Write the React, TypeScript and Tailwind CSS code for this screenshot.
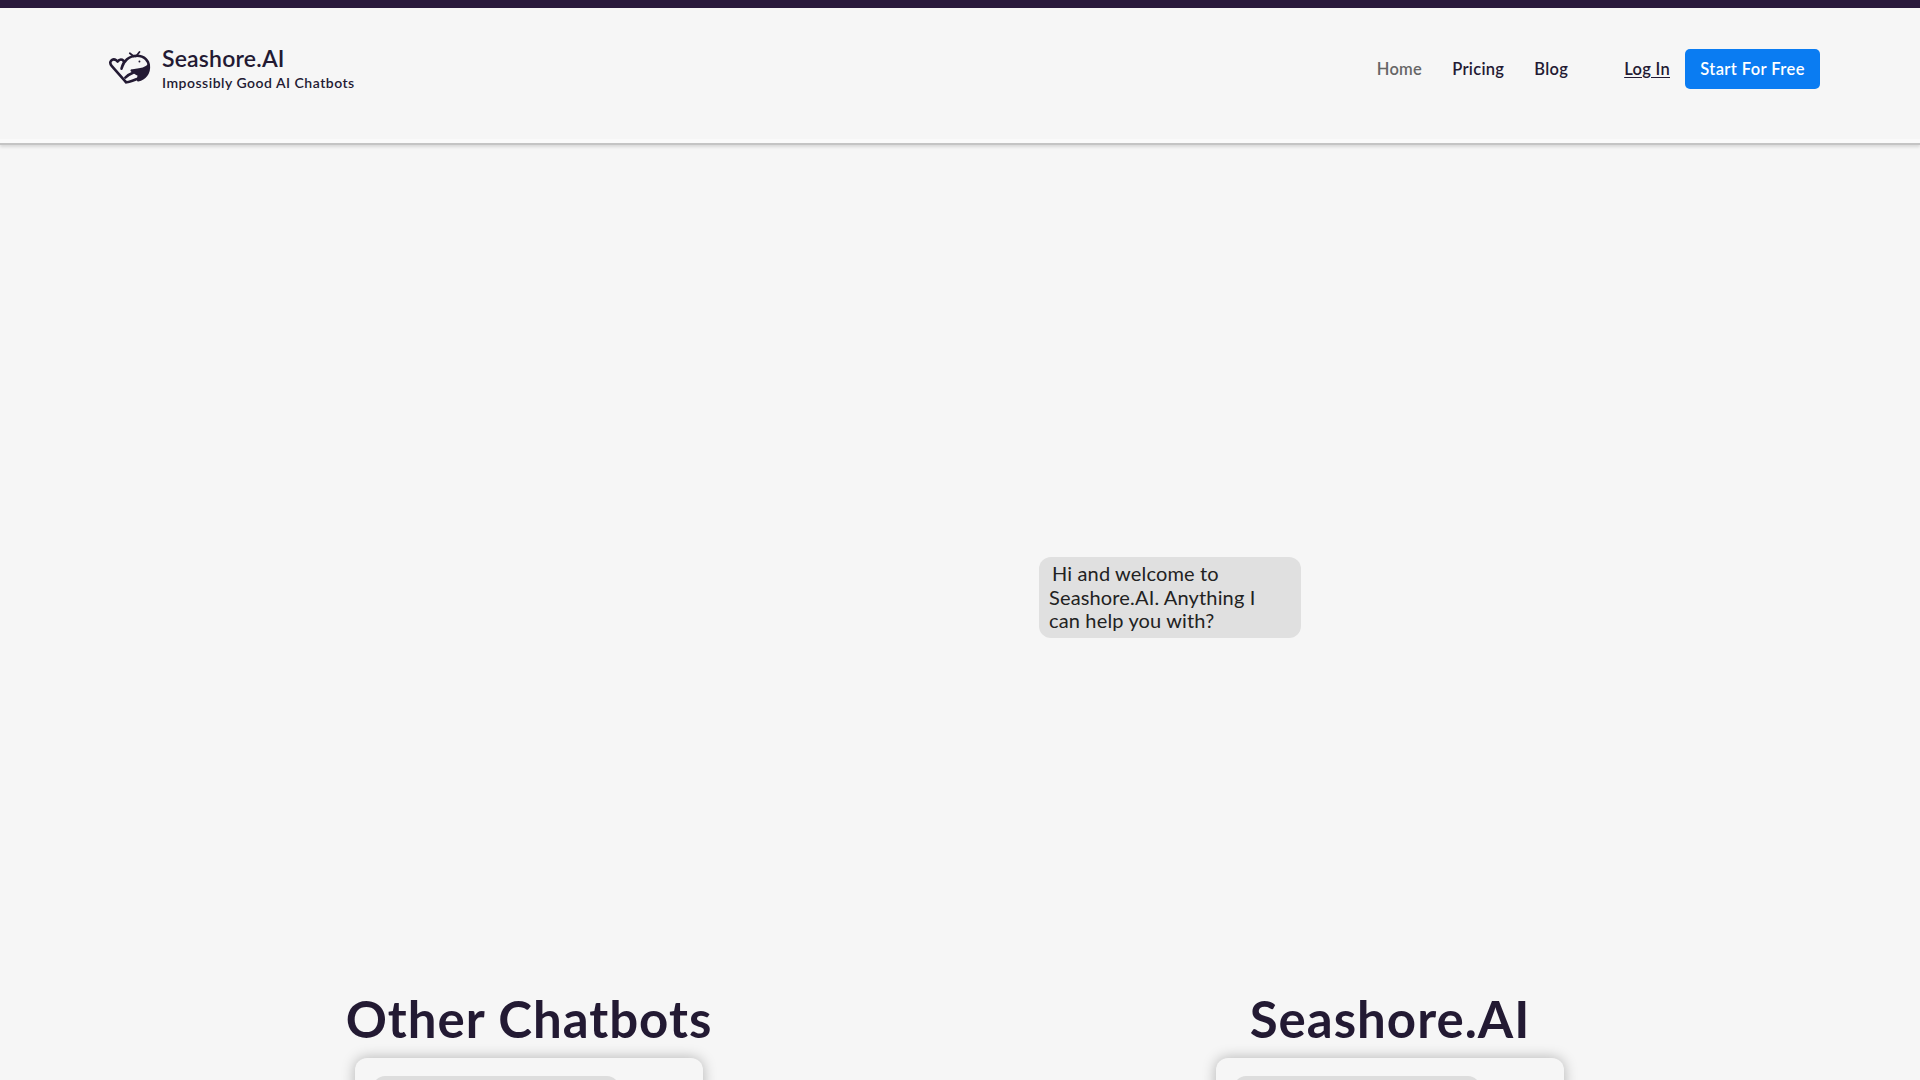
const font = "font-['Lato','Noto_Sans',sans-serif]";

function WhaleLogo() {
  return (
    <svg viewBox="54 64 134 104" className="w-[43px] h-[34px] -mt-[2px]" fill="none" stroke="#231a33" strokeWidth="8" strokeLinecap="round" strokeLinejoin="round">
      {/* tail and back */}
      <path d="M110 160 L66 110 C54 96 68 84 80 92 L84 96 C92 84 108 90 102 104 C99 110 97 113 96 118 C102 94 120 78 144 78 C168 78 182 94 181 112" />
      {/* flipper */}
      <path d="M108 146 C116 138 124 134 132 131" />
      <path d="M110 160 C120 162 134 154 150 148" />
      <path d="M128 124 C146 122 168 122 181 108 C184 132 168 150 148 154 L150 138 C144 134 136 130 128 124 Z" fill="#231a33" />
      {/* spout */}
      <path d="M122 70 L135 80 M152 66 L141 80" strokeWidth="5.5" />
      <circle cx="152" cy="96" r="3" fill="#231a33" stroke="none" />
    </svg>
  );
}

function Navbar() {
  return (
    <header className="h-[137px] shrink-0 flex items-center justify-between pl-[108px] pr-[100px] pb-[13px] border-b-2 border-[#c4c4c4] shadow-[inset_0_-5px_0_-1px_#fafafa,0_2px_3px_rgba(0,0,0,0.12)]">
      <div className="flex items-center gap-[11px]">
        <WhaleLogo />
        <div className="flex flex-col text-[#231a33]">
          <span className="text-[23px] leading-[26px] font-semibold tracking-[0.2px]">Seashore.AI</span>
          <span className="mt-[2px] text-[14px] leading-[20px] font-semibold tracking-[0.5px]">Impossibly Good AI Chatbots</span>
        </div>
      </div>
      <nav className="flex items-center text-[16.5px] font-semibold tracking-[0.3px] text-[#231a33]">
        <a className="text-[#666666]">Home</a>
        <a className="ml-[30px]">Pricing</a>
        <a className="ml-[30px]">Blog</a>
        <a className="ml-[56px] underline underline-offset-2">Log In</a>
        <a className="ml-[15px] w-[135px] h-[40px] flex items-center justify-center rounded-[5px] bg-[#0a7cf2] text-white tracking-[0.4px]">Start For Free</a>
      </nav>
    </header>
  );
}

function Comparison({ title }: { title: string }) {
  return (
    <div className="w-[348px] flex flex-col items-center">
      <h2 className="whitespace-nowrap text-[51px] leading-[62px] font-bold tracking-[1px] text-[#231a33]">{title}</h2>
      <div className="mt-[8px] w-full h-[200px] px-[18px] pt-[18px] rounded-[12px] bg-[#f6f6f6] shadow-[0_0_14px_rgba(0,0,0,0.28)]">
        <div className="w-[246px] h-[60px] rounded-[12px] bg-[#dddddd]" />
      </div>
    </div>
  );
}

export default function App() {
  return (
    <div className={`${font} w-full h-[1080px] overflow-hidden flex flex-col bg-[#f6f6f6]`}>
      <div className="h-[8px] shrink-0 bg-[#2a1a3c]" />
      <Navbar />
      <main className="flex flex-col">
        <div className="ml-[1039px] mt-[412px] w-[262px] h-[81px] rounded-[12px] bg-[#e0e0e0] pl-[10px] pt-[5px] text-[20px] leading-[23.5px] tracking-[0.15px] text-[#222222]">
          <div className="pl-[3px]">Hi and welcome to</div>
          <div>Seashore.AI. Anything I</div>
          <div>can help you with?</div>
        </div>
        <div className="mt-[350px] ml-[355px] flex gap-[513px]">
          <Comparison title="Other Chatbots" />
          <Comparison title="Seashore.AI" />
        </div>
      </main>
    </div>
  );
}
